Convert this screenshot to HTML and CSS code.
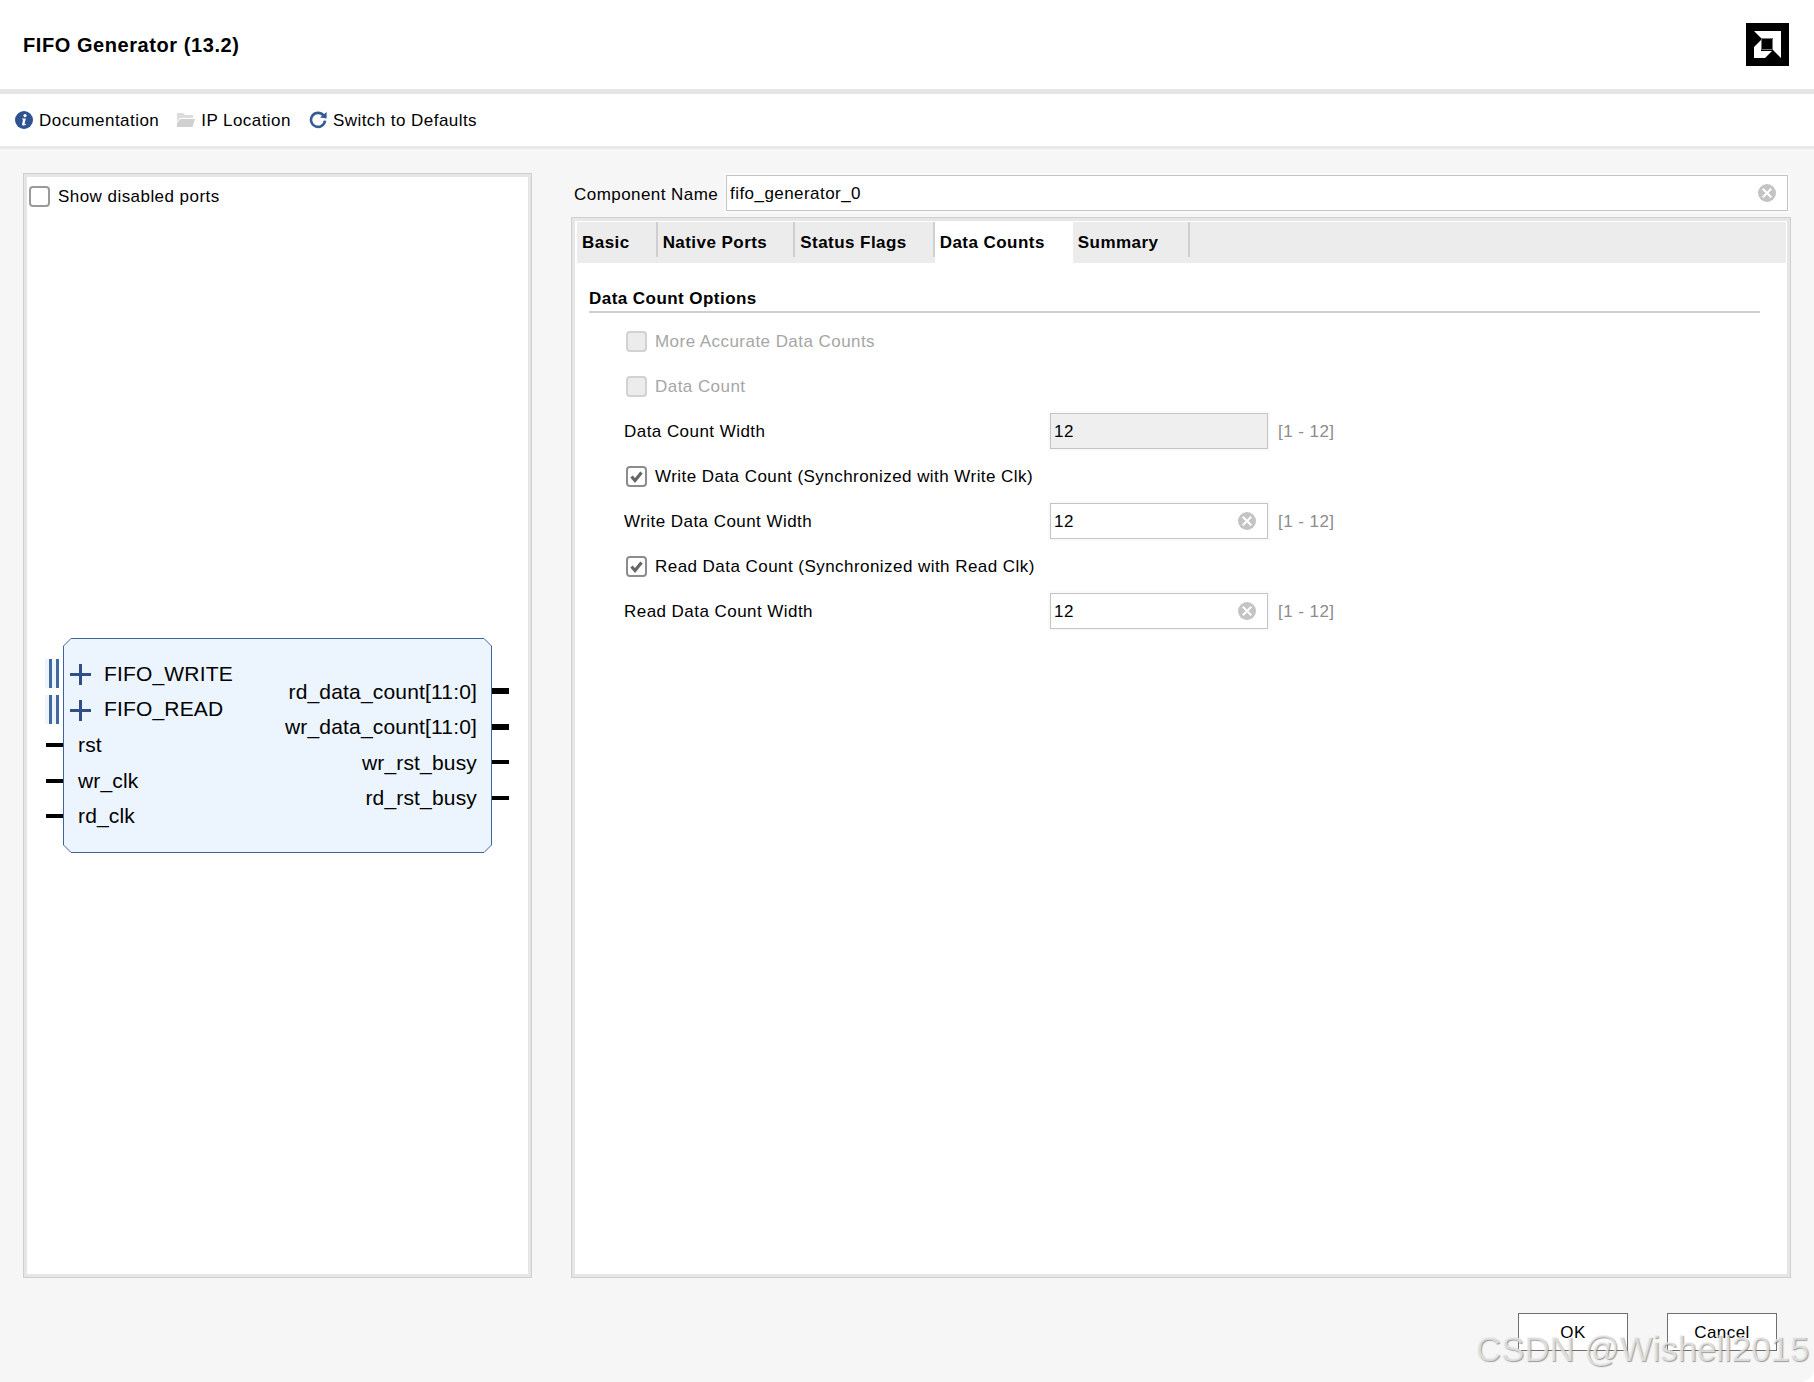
FILE: index.html
```html
<!DOCTYPE html>
<html lang="en">
<head>
<meta charset="utf-8">
<title>FIFO Generator (13.2)</title>
<link rel="stylesheet" href="styles.css">
</head>
<body>
<div class="app">
  <header class="header">
    <h1 class="title">FIFO Generator (13.2)</h1>
    <svg class="logo" viewBox="0 0 43 43" width="43" height="43">
      <rect width="43" height="43" fill="#000"/>
      <path fill="#fff" d="M8 8H35V35L27 27V15H15Z"/>
      <path fill="#fff" d="M8 35V24L15 17V28H26L19 35Z"/>
      <path fill="none" stroke="#777" d="M15.5 15.5H26.5V26.5H15.5Z"/>
    </svg>
  </header>
  <nav class="toolbar">
    <span class="tool">
      <svg class="icon" viewBox="0 0 18 18" width="18" height="18"><circle cx="9" cy="9" r="9" fill="#2f5290"/><circle cx="10" cy="4.6" r="1.6" fill="#fff"/><path fill="#fff" d="M7 7.6h3.9L9.6 12.6c-.1.5.3.6 1.3.1l.2.7c-1.3.9-2.4 1.2-3.2 1-.8-.2-1-.7-.8-1.5l1-4.4L7 8.3Z"/></svg>
      <span class="tool-text">Documentation</span>
    </span>
    <span class="tool">
      <svg class="icon" viewBox="0 0 18 18" width="18" height="18"><path fill="#dcdcdc" d="M0 2h6l2 2h8v3H3L0 11Z"/><path fill="#d0d0d0" d="M3.5 8H18l-2.5 8H0V12Z"/></svg>
      <span class="tool-text">IP Location</span>
    </span>
    <span class="tool">
      <svg class="icon" viewBox="0 0 18 18" width="18" height="18"><path fill="none" stroke="#365a94" stroke-width="2.6" d="M14.6 4.6A7 7 0 1 0 16 9.6"/><path fill="#365a94" d="M11 6.6 17.6 1v6.6Z"/></svg>
      <span class="tool-text">Switch to Defaults</span>
    </span>
  </nav>
  <main class="main">
    <section class="schematic panel">
      <label class="show-row">
        <span class="check check-show"></span>
        Show disabled ports
      </label>
      <svg class="diagram" viewBox="40 630 480 230" width="480" height="230">
        <path class="block" d="M71 638.5H484L491.500 646V845L484 852.500H71L63.500 845V646Z"/>
        <rect class="bus-bg" x="45" y="659" width="14" height="29"/>
        <rect class="bus-bg" x="45" y="695" width="14" height="29"/>
        <rect class="bus" x="49" y="659" width="3" height="29"/>
        <rect class="bus" x="56" y="659" width="3" height="29"/>
        <rect class="bus" x="49" y="695" width="3" height="29"/>
        <rect class="bus" x="56" y="695" width="3" height="29"/>
        <path class="plus" d="M70 674.500H91M80.500 664V685M70 710.500H91M80.500 700V721"/>
        <rect class="pin" x="46" y="743" width="17" height="4"/>
        <rect class="pin" x="46" y="779" width="17" height="4"/>
        <rect class="pin" x="46" y="814" width="17" height="4"/>
        <rect class="pin" x="492" y="688" width="17" height="6"/>
        <rect class="pin" x="492" y="724" width="17" height="6"/>
        <rect class="pin" x="492" y="760" width="17" height="4"/>
        <rect class="pin" x="492" y="796" width="17" height="4"/>
        <text class="port" x="104" y="681">FIFO_WRITE</text>
        <text class="port" x="104" y="716">FIFO_READ</text>
        <text class="port" x="78" y="752">rst</text>
        <text class="port" x="78" y="788">wr_clk</text>
        <text class="port" x="78" y="823">rd_clk</text>
        <text class="port end" x="477" y="699">rd_data_count[11:0]</text>
        <text class="port end" x="477" y="734">wr_data_count[11:0]</text>
        <text class="port end" x="477" y="770">wr_rst_busy</text>
        <text class="port end" x="477" y="805">rd_rst_busy</text>
      </svg>
    </section>
    <section class="config">
      <div class="name-row">
        <span class="name-label">Component Name</span>
        <div class="field field-name">
          <span class="field-text">fifo_generator_0</span>
          <span class="clear"></span>
        </div>
      </div>
      <div class="tabs-panel panel">
        <div class="tabs">
          <span class="tab">Basic</span>
          <span class="tab">Native Ports</span>
          <span class="tab">Status Flags</span>
          <span class="tab tab-active">Data Counts</span>
          <span class="tab">Summary</span>
        </div>
        <div class="tab-body">
          <h2 class="group-title">Data Count Options</h2>
          <div class="row row-check disabled"><span class="check check-off"></span><span class="row-text">More Accurate Data Counts</span></div>
          <div class="row row-check disabled"><span class="check check-off"></span><span class="row-text">Data Count</span></div>
          <div class="row">
            <span class="row-label">Data Count Width</span>
            <div class="field field-small field-disabled"><span class="field-text">12</span></div>
            <span class="range">[1 - 12]</span>
          </div>
          <div class="row row-check"><span class="check check-on"><svg viewBox="0 0 21 21" width="21" height="21"><path fill="none" stroke="#666" stroke-width="3.2" d="M5.500 10.500 9 14.500 15.500 6.500"/></svg></span><span class="row-text">Write Data Count (Synchronized with Write Clk)</span></div>
          <div class="row">
            <span class="row-label">Write Data Count Width</span>
            <div class="field field-small"><span class="field-text">12</span><span class="clear"></span></div>
            <span class="range">[1 - 12]</span>
          </div>
          <div class="row row-check"><span class="check check-on"><svg viewBox="0 0 21 21" width="21" height="21"><path fill="none" stroke="#666" stroke-width="3.2" d="M5.500 10.500 9 14.500 15.500 6.500"/></svg></span><span class="row-text">Read Data Count (Synchronized with Read Clk)</span></div>
          <div class="row">
            <span class="row-label">Read Data Count Width</span>
            <div class="field field-small"><span class="field-text">12</span><span class="clear"></span></div>
            <span class="range">[1 - 12]</span>
          </div>
        </div>
      </div>
    </section>
  </main>
  <footer class="footer">
    <button class="btn" type="button">OK</button>
    <button class="btn" type="button">Cancel</button>
  </footer>
  <div class="watermark">CSDN @Wishell2015</div>
</div>
</body>
</html>
```
FILE: styles.css
```css
* { box-sizing: border-box; }
html, body { margin: 0; padding: 0; background: #fff; }
body {
  font-family: "Liberation Sans", Arial, sans-serif;
  font-size: 17px;
  letter-spacing: .45px;
  color: #000;
}
.app {
  position: relative;
  width: 1814px;
  height: 1382px;
  display: flex;
  flex-direction: column;
  background: #f6f6f6;
  border-bottom-right-radius: 14px;
  overflow: hidden;
}
.header {
  height: 94px;
  flex: none;
  background: #fff;
  border-bottom: 5px solid #e5e5e5;
  display: flex;
  align-items: center;
  justify-content: space-between;
  padding: 0 25px 0 23px;
}
.title {
  margin: 0;
  padding-top: 2px;
  font-size: 20px;
  font-weight: bold;
  letter-spacing: .57px;
  color: #000;
}
.logo { display: block; }
.toolbar {
  height: 55px;
  flex: none;
  background: #fff;
  border-bottom: 3px solid #e8e8e8;
  display: flex;
  align-items: center;
  gap: 18px;
  padding: 0 0 0 15px;
}
.tool { display: flex; align-items: center; gap: 6px; }
.tool-text { padding-top: 2px; }
.icon { display: block; flex: none; }
.main {
  flex: 1;
  display: flex;
  gap: 39px;
  padding: 24px 23px 0;
  min-height: 0;
}
.panel {
  background: #fff;
  border: 1px solid #cfcfcf;
  box-shadow: inset 0 0 0 3px #e6e6e6;
}
.schematic {
  width: 509px;
  flex: none;
  padding: 4px;
}
.show-row {
  display: flex;
  align-items: center;
  gap: 8px;
  height: 37px;
  padding-left: 1px;
}
.check {
  width: 21px;
  height: 21px;
  flex: none;
  display: block;
  border-radius: 4px;
  border: 2px solid #9a9a9a;
  background: #fff;
}
.check svg { display: block; margin: -2px; }
.check-off { background: #ececec; border-color: #d2d2d2; }
.check-on { border-color: #8c8c8c; }
.diagram { display: block; margin: 415px 0 0 12px; }
.block { fill: #ecf4fd; stroke: #3f639f; stroke-width: 1; }
.bus-bg { fill: #eef4fb; }
.bus { fill: #41699f; }
.plus { fill: none; stroke: #2f4f8a; stroke-width: 3; }
.pin { fill: #000; }
.port {
  font-family: "Liberation Sans", Arial, sans-serif;
  font-size: 21px;
  letter-spacing: .17px;
  fill: #000;
}
.end { text-anchor: end; }
.config {
  flex: 1;
  min-width: 0;
  display: flex;
  flex-direction: column;
}
.name-row {
  height: 44px;
  flex: none;
  display: flex;
  align-items: flex-start;
  padding-right: 3px;
}
.name-label { width: 155px; padding: 12px 0 0 3px; flex: none; }
.field {
  display: flex;
  align-items: center;
  justify-content: space-between;
  background: #fff;
  border: 1px solid #c4c4c4;
  box-shadow: 0 0 0 2px #fafafa;
  padding: 0 11px 0 3px;
  margin-top: 2px;
}
.field-text { padding-top: 2px; }
.field-name { flex: 1; height: 36px; }
.field-small { width: 218px; height: 36px; margin: 0; }
.field-disabled { background: #efefef; }
.clear {
  position: relative;
  width: 18px;
  height: 18px;
  border-radius: 50%;
  background: #c4c4c4;
  flex: none;
}
.clear::before, .clear::after {
  content: "";
  position: absolute;
  left: 3px;
  top: 8px;
  width: 12px;
  height: 2px;
  background: #fff;
  transform: rotate(45deg);
}
.clear::after { transform: rotate(-45deg); }
.tabs-panel {
  flex: 1;
  padding: 4px 4px 4px 5px;
  min-height: 0;
}
.tabs {
  height: 41px;
  display: flex;
  background: #ececec;
  font-weight: bold;
}
.tab {
  position: relative;
  padding: 0 26px 0 5px;
  line-height: 42px;
  height: 41px;
  border-right: 2px solid transparent;
}
.tab:last-child { padding-right: 30px; }
.tab::after {
  content: "";
  position: absolute;
  right: -2px;
  top: 0;
  height: 35px;
  width: 2px;
  background: #cfcfcf;
}
.tab-active { background: #fff; }
.tab-active::after { display: none; }
.tab-body { padding: 20px 26px 0 12px; }
.group-title {
  margin: 0 0 5.9px;
  font-size: 17px;
  font-weight: bold;
  height: 30px;
  line-height: 32px;
  border-bottom: 2px solid #cfcfcf;
}
.row {
  height: 45px;
  display: flex;
  align-items: center;
  padding-left: 35px;
}
.row-check { gap: 8px; padding-left: 37px; }
.row-text { padding-top: 1px; }
.disabled { color: #a6a6a6; }
.row-label { width: 426px; flex: none; padding-top: 1px; }
.range { margin-left: 10px; padding-top: 1px; color: #8c8c8c; }
.footer {
  height: 104px;
  flex: none;
  display: flex;
  justify-content: flex-end;
  gap: 39px;
  padding: 35px 37px 0 0;
}
.btn {
  width: 110px;
  height: 38px;
  background: #fff;
  border: 1px solid #6f6f6f;
  border-radius: 0;
  font: inherit;
  letter-spacing: inherit;
  color: #000;
  padding: 2px 0 0;
}
.watermark {
  position: absolute;
  right: 5px;
  top: 1329px;
  font-size: 34.8px;
  line-height: 40px;
  letter-spacing: 0;
  color: rgba(238, 238, 238, .75);
  text-shadow: 1px 1px 1px rgba(120, 120, 120, .7);
  white-space: nowrap;
}
```
